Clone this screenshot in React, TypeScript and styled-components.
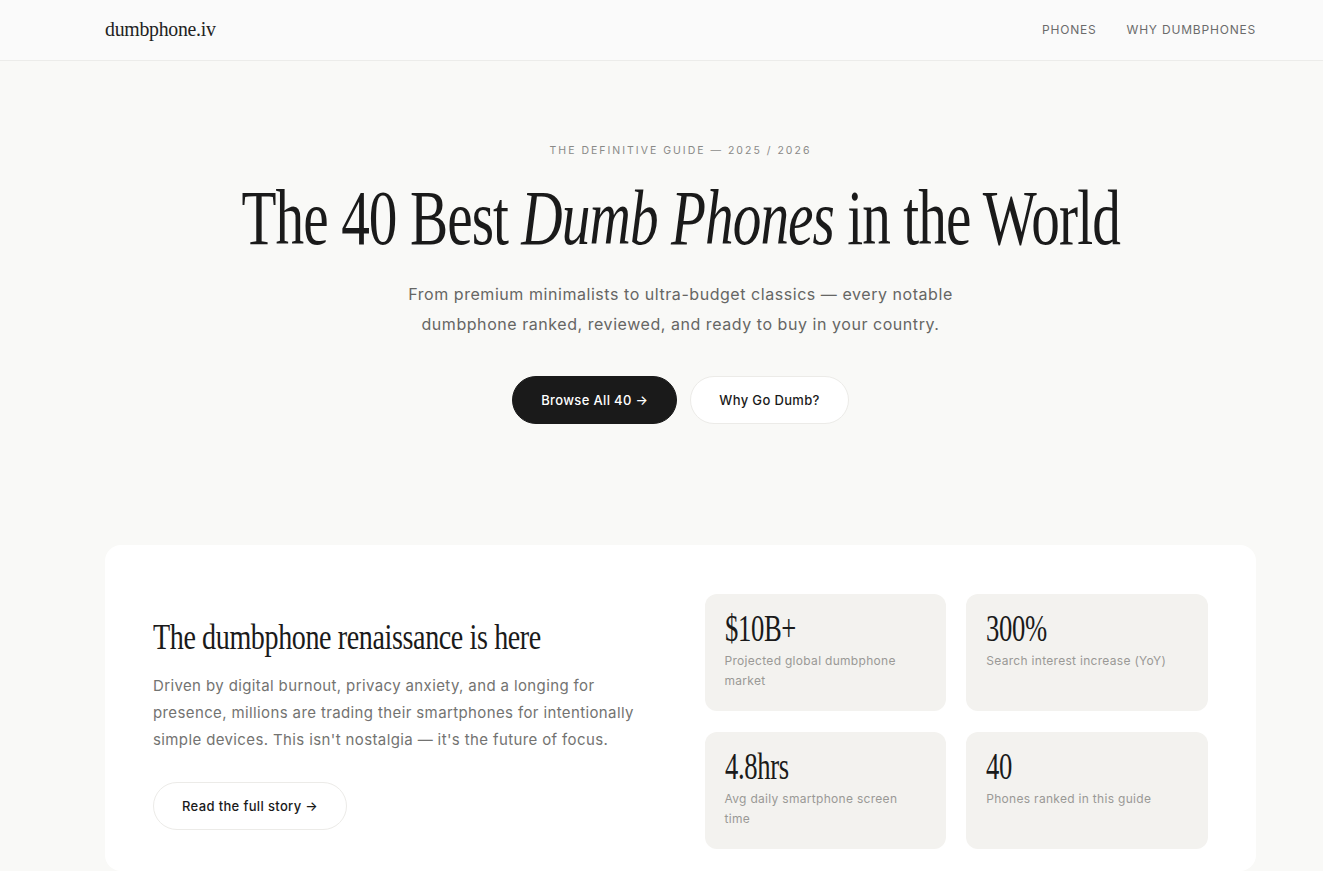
import React from "react";
import styled, { createGlobalStyle } from "styled-components";

const Global = createGlobalStyle`
  html, body { margin: 0; padding: 0; }
  body {
    background: #f9f9f7;
    font-family: Inter, "Noto Sans", sans-serif;
    color: #1a1a1a;
    overflow-x: hidden;
  }
  * { box-sizing: border-box; }
`;

const SERIF = `"Liberation Serif", "DejaVu Serif", serif`;

const Page = styled.div`
  min-height: 871px;
  background: #f9f9f7;
`;

const NavBar = styled.header`
  height: 61px;
  background: #fafafa;
  border-bottom: 1px solid #ececea;
`;

const Container = styled.div`
  width: 1151px;
  margin-left: 105px;
`;

const NavInner = styled(Container)`
  height: 100%;
  display: flex;
  align-items: center;
  justify-content: space-between;
`;

const Logo = styled.a`
  font-family: ${SERIF};
  font-size: 22px;
  color: #222;
  letter-spacing: -0.3px;
  display: inline-block;
  transform: scaleX(0.9);
  transform-origin: left center;
  text-decoration: none;
  margin-top: -3px;
`;

const NavLinks = styled.nav`
  display: flex;
  gap: 30px;
  margin-top: -2px;
`;

const NavLink = styled.a`
  font-size: 12px;
  letter-spacing: 0.8px;
  text-transform: uppercase;
  color: #6b6b6b;
  text-decoration: none;
`;

const Hero = styled.section`
  display: flex;
  flex-direction: column;
  align-items: center;
  padding-top: 82px;
`;

const Eyebrow = styled.div`
  font-size: 10.5px;
  letter-spacing: 2px;
  text-transform: uppercase;
  color: #8a8a88;
  line-height: 16px;
`;

const Headline = styled.h1`
  margin: 14px 0 0;
  font-family: ${SERIF};
  font-weight: 400;
  font-size: 79px;
  line-height: 90px;
  letter-spacing: -1.3px;
  color: #1a1a1a;
  white-space: nowrap;
  transform: scaleX(0.725);
  em { font-style: italic; }
`;

const Sub = styled.p`
  margin: 16px 0 0;
  max-width: 600px;
  text-align: center;
  font-size: 16px;
  line-height: 30px;
  letter-spacing: 0.55px;
  color: #666664;
`;

const Actions = styled.div`
  display: flex;
  gap: 13px;
  margin-top: 37px;
`;

const Pill = styled.a<{ $dark?: boolean; $gap?: number }>`
  display: inline-flex;
  align-items: center;
  justify-content: center;
  height: 48px;
  padding: 0 28px;
  margin-top: ${(p) => p.$gap ?? 0}px;
  border-radius: 999px;
  font-size: 13px;
  font-weight: 500;
  letter-spacing: 0.35px;
  text-decoration: none;
  background: ${(p) => (p.$dark ? "#1a1a1a" : "#ffffff")};
  color: ${(p) => (p.$dark ? "#ffffff" : "#1a1a1a")};
  border: 1px solid ${(p) => (p.$dark ? "#1a1a1a" : "#ecebe8")};
`;

const Card = styled(Container)`
  margin-top: 121px;
  background: #ffffff;
  border-radius: 16px;
  padding: 49px 48px 22px;
  display: grid;
  grid-template-columns: 1fr 1fr;
  gap: 48px;
  align-items: center;
`;

const Story = styled.div`
  display: flex;
  flex-direction: column;
  align-items: flex-start;
`;

const StoryTitle = styled.h2`
  margin: 2px 0 0;
  font-family: ${SERIF};
  font-weight: 400;
  font-size: 36px;
  line-height: 44px;
  letter-spacing: -0.5px;
  color: #1a1a1a;
  white-space: nowrap;
  transform: scaleX(0.78);
  transform-origin: left center;
`;

const StoryText = styled.p`
  margin: 13px 0 0;
  font-size: 15px;
  line-height: 27px;
  letter-spacing: 0.38px;
  color: #737371;
  max-width: 500px;
`;

const Stats = styled.div`
  display: grid;
  grid-template-columns: 1fr 1fr;
  column-gap: 20px;
  row-gap: 21px;
`;

const Stat = styled.div`
  background: #f3f2ef;
  border-radius: 12px;
  height: 117px;
  padding: 14px 20px;
`;

const StatValue = styled.div`
  font-family: ${SERIF};
  font-size: 37px;
  line-height: 42px;
  color: #1a1a1a;
  letter-spacing: -0.5px;
  transform: scaleX(0.72);
  transform-origin: left center;
`;

const StatLabel = styled.div`
  margin-top: 1px;
  font-size: 12px;
  line-height: 20px;
  letter-spacing: 0.3px;
  color: #9a9996;
  max-width: 190px;
`;

const stats = [
  { value: "$10B+", label: "Projected global dumbphone market" },
  { value: "300%", label: "Search interest increase (YoY)" },
  { value: "4.8hrs", label: "Avg daily smartphone screen time" },
  { value: "40", label: "Phones ranked in this guide" },
];

export default function App() {
  return (
    <Page>
      <Global />
      <NavBar>
        <NavInner>
          <Logo href="#">dumbphone.iv</Logo>
          <NavLinks>
            <NavLink href="#">Phones</NavLink>
            <NavLink href="#">Why Dumbphones</NavLink>
          </NavLinks>
        </NavInner>
      </NavBar>
      <Container>
        <Hero>
          <Eyebrow>The Definitive Guide — 2025 / 2026</Eyebrow>
          <Headline>
            The 40 Best <em>Dumb Phones</em> in the World
          </Headline>
          <Sub>
            From premium minimalists to ultra-budget classics — every notable
            dumbphone ranked, reviewed, and ready to buy in your country.
          </Sub>
          <Actions>
            <Pill $dark href="#">Browse All 40 →</Pill>
            <Pill href="#">Why Go Dumb?</Pill>
          </Actions>
        </Hero>
      </Container>
      <Card>
        <Story>
          <StoryTitle>The dumbphone renaissance is here</StoryTitle>
          <StoryText>
            Driven by digital burnout, privacy anxiety, and a longing for
            presence, millions are trading their smartphones for intentionally
            simple devices. This isn't nostalgia — it's the future of focus.
          </StoryText>
          <Pill href="#" $gap={29}>Read the full story →</Pill>
        </Story>
        <Stats>
          {stats.map((s) => (
            <Stat key={s.value}>
              <StatValue>{s.value}</StatValue>
              <StatLabel>{s.label}</StatLabel>
            </Stat>
          ))}
        </Stats>
      </Card>
    </Page>
  );
}
